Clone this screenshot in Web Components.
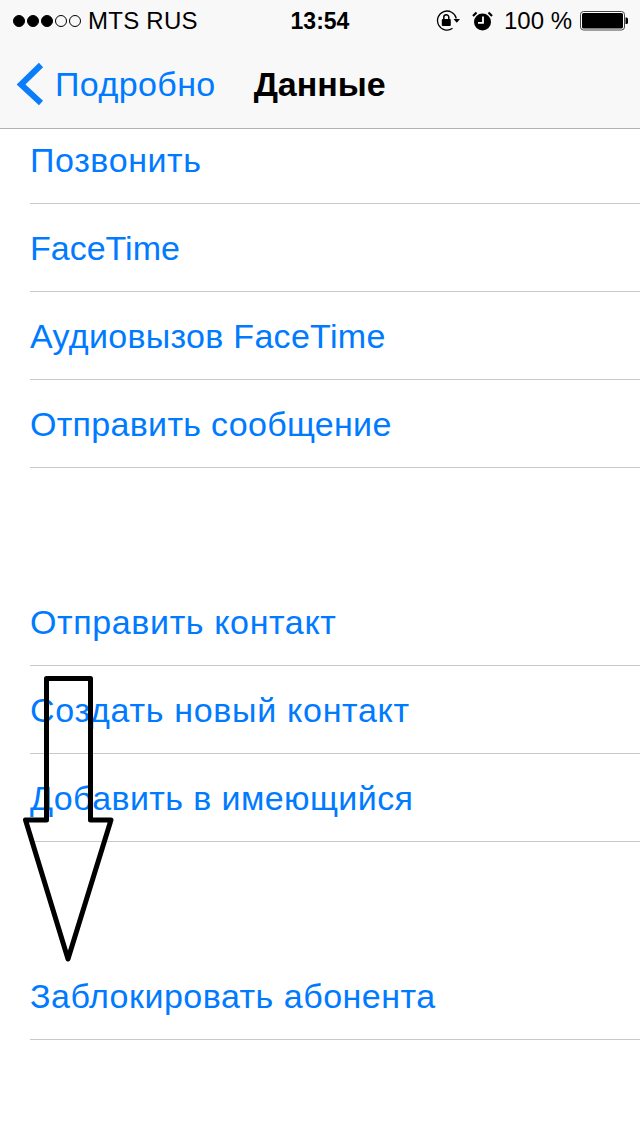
<!DOCTYPE html>
<html><head><meta charset="utf-8"><style>
html,body{margin:0;padding:0;background:#fff}
body{width:640px;height:1136px;overflow:hidden;position:relative;font-family:"Liberation Sans",Arial,sans-serif}
</style></head><body>
<template id="t-status"><style>
:host{display:grid;grid-template-columns:1fr auto 1fr;align-items:center;height:40px;color:#000;font-size:24px;line-height:28px;padding-top:1px;box-sizing:border-box}
.left{display:flex;align-items:center;padding-left:13px}
.sig{display:flex;gap:2px}
.sig i{width:12px;height:12px;border-radius:50%;box-sizing:border-box;border:1px solid #000;display:block}
.sig i.f{background:#000}
.car{margin-left:7px;letter-spacing:.25px}
.time{font-weight:bold;font-size:23px}
.right{display:flex;align-items:center;justify-content:flex-end;padding-right:12px}
.pct{margin:0 8px 0 11px}
svg{display:block}
</style>
<div class="left"><div class="sig"><i class="f"></i><i class="f"></i><i class="f"></i><i></i><i></i></div><span class="car">MTS RUS</span></div>
<span class="time">13:54</span>
<div class="right">
<svg width="24" height="21" viewBox="0 0 24 21" style="margin-right:12px"><path d="M20.300 8.500A9.500 9.500 0 1 0 16.500 18.300" fill="none" stroke="#000" stroke-width="1.300"/><path d="M17.500 9h6.500l-3.200 3.800z" fill="#000"/><rect x="5.800" y="9" width="9" height="7" rx="1" fill="#000"/><path d="M7.800 9V7.300a2.500 2.500 0 0 1 5 0V9" fill="none" stroke="#000" stroke-width="1.500"/></svg>
<svg width="21" height="20" viewBox="0 0 21 20"><circle cx="10.500" cy="11" r="8.500" fill="#000"/><path d="M11 5.500V11.800H6" fill="none" stroke="#fff" stroke-width="1.800"/><path d="M1 5 4.500 1.500M20 5 16.500 1.500" stroke="#000" stroke-width="2.200"/></svg>
<span class="pct">100 %</span>
<svg width="48" height="20" viewBox="0 0 48 20"><rect x=".5" y=".5" width="44" height="18.500" rx="3" fill="#fff" stroke="#444"/><rect x="2" y="2" width="41" height="15.500" rx="1.500" fill="#000"/><path d="M45.500 6.500h1a1.500 1.500 0 0 1 1.500 1.500v3.500a1.500 1.500 0 0 1-1.500 1.500h-1z" fill="#000"/></svg>
</div></template>
<template id="t-nav"><style>
:host{display:flex;align-items:center;height:89px;box-sizing:border-box;border-bottom:1px solid #b2b2b2}
svg{display:block;margin-left:16px}
.back{color:#007aff;font-size:34px;letter-spacing:.4px;margin-left:11px;line-height:40px}
.title{font-weight:bold;font-size:34px;color:#000;margin-left:38px;line-height:40px}
</style>
<svg width="28" height="44" viewBox="0 0 28 44"><path d="M25 3 5 22.500 25 41" fill="none" stroke="#0a7dfb" stroke-width="6"/></svg>
<span class="back"><slot name="back"></slot></span><span class="title"><slot name="title"></slot></span></template>
<template id="t-header"><style>
:host{display:block;background:#f8f8f8}
</style><slot></slot></template>
<template id="t-row"><style>
:host{display:flex;align-items:flex-end;margin-left:30px;height:88px;box-sizing:border-box;border-bottom:1px solid #c8c7cc;color:#007aff;font-size:34px;letter-spacing:.5px;line-height:40px;padding-bottom:23px}
</style><slot></slot></template>
<template id="t-group"><style>
:host{display:block}
</style><slot></slot></template>
<template id="t-arrow"><style>
:host{position:absolute;left:0;top:0;pointer-events:none}
svg{display:block}
</style><svg width="640" height="1136" viewBox="0 0 640 1136"><path d="M46.500 678.500H90.500V820H111L68 959 25.500 820H46.500Z" fill="none" stroke="#000" stroke-width="5" stroke-linejoin="round"/></svg></template>
<app-header>
<status-bar></status-bar>
<nav-bar><span slot="back">Подробно</span><span slot="title">Данные</span></nav-bar>
</app-header>
<row-group>
<list-row style="height:75px;letter-spacing:.6px">Позвонить</list-row><list-row style="letter-spacing:0">FaceTime</list-row><list-row style="letter-spacing:.3px">Аудиовызов FaceTime</list-row><list-row style="letter-spacing:.3px">Отправить сообщение</list-row>
</row-group>
<row-group style="margin-top:110px">
<list-row style="letter-spacing:.62px">Отправить контакт</list-row><list-row style="letter-spacing:.7px">Создать новый контакт</list-row><list-row style="letter-spacing:.4px">Добавить в имеющийся</list-row>
</row-group>
<row-group style="margin-top:110px">
<list-row>Заблокировать абонента</list-row>
</row-group>
<hand-arrow></hand-arrow>
<script>
const reg=(n,t)=>customElements.define(n,class extends HTMLElement{constructor(){super();this.attachShadow({mode:'open'}).appendChild(document.getElementById(t).content.cloneNode(true))}});
reg('status-bar','t-status');reg('nav-bar','t-nav');reg('app-header','t-header');reg('list-row','t-row');reg('row-group','t-group');reg('hand-arrow','t-arrow');
</script>
</body></html>
